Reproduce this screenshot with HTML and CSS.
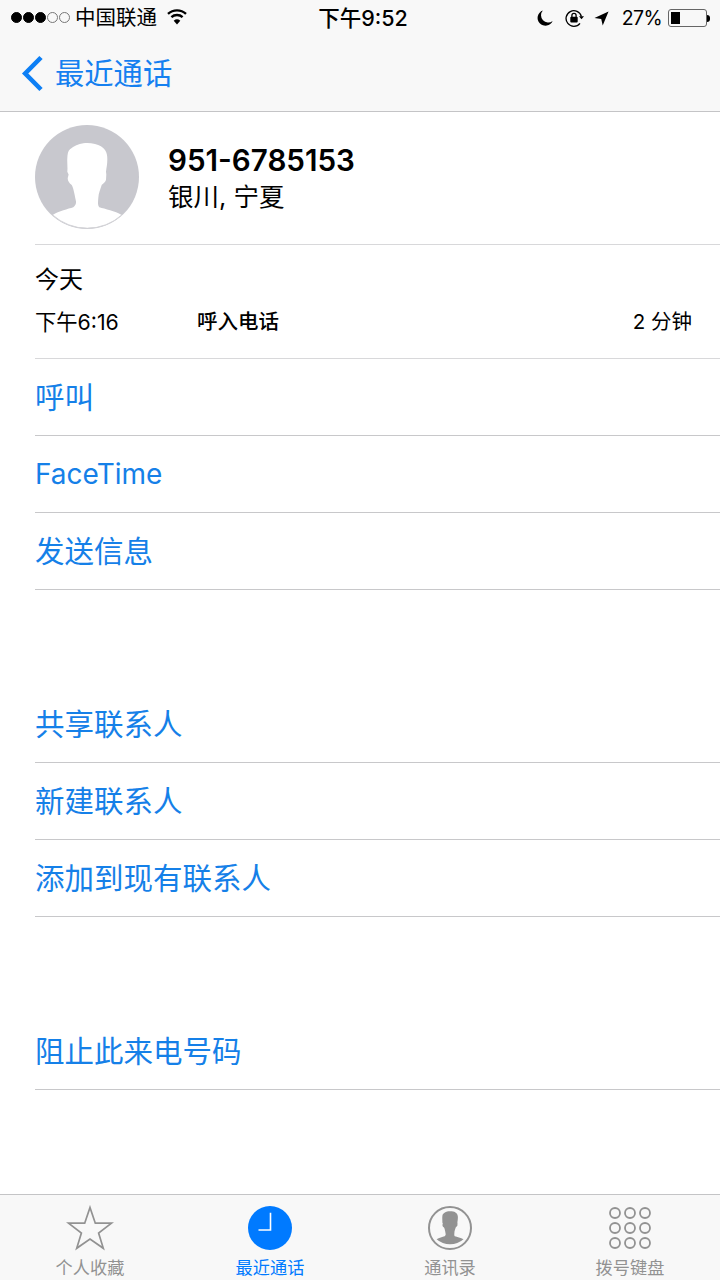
FILE: index.html
```html
<!DOCTYPE html>
<html lang="zh-CN">
<head>
    <meta charset="UTF-8">
    <meta name="viewport" content="width=device-width, initial-scale=1.0">
    <link rel="stylesheet" href="styles.css">
    <title>最近通话</title>
</head>
<body>
    <div class="screen">
        <header class="top-bar">
            <div class="status-bar">
                <div class="status-left">
                    <span class="signal">
                        <i class="dot dot--on"></i><i class="dot dot--on"></i><i class="dot dot--on"></i><i class="dot"></i><i class="dot"></i>
                    </span>
                    <span class="carrier">中国联通</span>
                    <svg class="wifi" width="20" height="16" viewBox="0 0 20 16">
                        <path d="M10 15.500 6.700 11.800a5 5 0 0 1 6.600 0z" fill="#000"/>
                        <path d="M4.400 8.200a8.400 8.400 0 0 1 11.200 0M1 4.800a13.400 13.400 0 0 1 18 0" fill="none" stroke="#000" stroke-width="2.400"/>
                    </svg>
                </div>
                <div class="status-time">下午9:52</div>
                <div class="status-right">
                    <svg class="moon" width="16" height="16" viewBox="0 0 17 17">
                        <path d="M6.200 .6a7.600 7.600 0 0 0 10.400 11A8.300 8.300 0 1 1 6.200 .6z" fill="#000"/>
                    </svg>
                    <svg class="rotation" width="20" height="18" viewBox="0 0 20 18">
                        <path d="M16.400 7.500A7.800 7.800 0 1 0 15 14.300" fill="none" stroke="#000" stroke-width="1.300"/>
                        <path d="M14 7.200h5l-2.500 3z" fill="#000"/>
                        <rect x="5.300" y="7.800" width="7.400" height="5.600" rx="1" fill="#000"/>
                        <path d="M6.900 8V6.400a2.100 2.100 0 0 1 4.200 0V8" fill="none" stroke="#000" stroke-width="1.300"/>
                    </svg>
                    <svg class="arrow" width="15" height="15" viewBox="0 0 16 16">
                        <path d="M15.500 .6 .5 7.400l7.200 1 1.600 7z" fill="#000"/>
                    </svg>
                    <span class="battery-pct">27%</span>
                    <span class="battery"><span class="battery-level"></span></span>
                    <span class="battery-cap"></span>
                </div>
            </div>
            <nav class="nav-bar">
                <svg class="back" width="24" height="37" viewBox="0 0 24 37">
                    <path d="M21 2.500 5.200 18.500 21 34.500" fill="none" stroke="#0d7ff5" stroke-width="4.600"/>
                </svg>
                <span class="back-label">最近通话</span>
            </nav>
        </header>

        <main class="content">
            <section class="contact">
                <div class="avatar">
                    <svg width="104" height="104" viewBox="0 0 104 104">
                        <circle cx="52" cy="52" r="52" fill="#c8c8ce"/>
                        <path d="M17.700 90C24 86 33 84 38.300 82.300 41 80 41.500 78 40.700 75 39.500 69 38.500 63 36.700 60 34 58 32.800 56 32.700 53.300L33.600 49.500 32.300 46.700C32.800 42 32 38 32.300 33.300 32.500 29 33 26 35 24.300 39 21 43.500 19 48.300 18.300 52 17.800 56 18 60 19 64.500 20 68 22 70 25 72 28 72.400 31 72.300 35 72.300 39 71.500 43 71 46.700L71.300 49.500 71 55C70 57.500 68 58.500 66.700 60 65.500 64 63.500 68 63.300 73 63 77 62.500 80 64.300 82.300 70 84 80 86 86.700 90A52 52 0 0 1 17.700 90z" fill="#fff"/>
                        <path d="M17.700 90A51.500 51.500 0 0 0 86.700 90" fill="none" stroke="#d4d4d8"/>
                    </svg>
                </div>
                <div class="contact-text">
                    <div class="contact-number">951-6785153</div>
                    <div class="contact-place">银川, 宁夏</div>
                </div>
            </section>

            <section class="call-log">
                <div class="call-day">今天</div>
                <div class="call-row">
                    <span class="call-time">下午6:16</span>
                    <span class="call-type">呼入电话</span>
                    <span class="call-length">2 分钟</span>
                </div>
            </section>

            <ul class="actions">
                <li>呼叫</li>
                <li class="action-latin">FaceTime</li>
                <li>发送信息</li>
            </ul>

            <ul class="actions actions--spaced">
                <li>共享联系人</li>
                <li>新建联系人</li>
                <li>添加到现有联系人</li>
            </ul>

            <ul class="actions actions--spaced">
                <li>阻止此来电号码</li>
            </ul>
        </main>

        <footer class="tab-bar">
            <div class="tab">
                <svg width="48" height="46" viewBox="0 0 48 46">
                    <path d="M24 2.500 29.300 18.200H45.500L32.600 28 37.300 43.300 24 34 10.700 43.300 15.400 28 2.500 18.200H18.700z" fill="none" stroke="#929292" stroke-width="1.700"/>
                </svg>
                <span class="tab-label">个人收藏</span>
            </div>
            <div class="tab tab--active">
                <svg width="48" height="46" viewBox="0 0 48 46">
                    <circle cx="24" cy="23" r="22" fill="#007aff"/>
                    <path d="M24.500 7.700V25H12.500" fill="none" stroke="#fff" stroke-width="1.600"/>
                </svg>
                <span class="tab-label">最近通话</span>
            </div>
            <div class="tab">
                <svg width="48" height="46" viewBox="0 0 48 46">
                    <path transform="translate(3.700 -.84) scale(.39)" d="M17.700 90C24 86 33 84 38.300 82.300 41 80 41.500 78 40.700 75 39.500 69 38.500 63 36.700 60 34 58 32.800 56 32.700 53.300L33.600 49.500 32.300 46.700C32.800 42 32 38 32.300 33.300 32.500 29 33 26 35 24.300 39 21 43.500 19 48.300 18.300 52 17.800 56 18 60 19 64.500 20 68 22 70 25 72 28 72.400 31 72.300 35 72.300 39 71.500 43 71 46.700L71.300 49.500 71 55C70 57.500 68 58.500 66.700 60 65.500 64 63.500 68 63.300 73 63 77 62.500 80 64.300 82.300 70 84 80 86 86.700 90A52 52 0 0 1 17.700 90z" fill="#929292"/>
                    <circle cx="24" cy="23" r="21" fill="none" stroke="#929292" stroke-width="2"/>
                </svg>
                <span class="tab-label">通讯录</span>
            </div>
            <div class="tab">
                <svg width="48" height="46" viewBox="0 0 48 46">
                    <g fill="none" stroke="#929292" stroke-width="1.800">
                        <circle cx="9" cy="8" r="5"/><circle cx="24" cy="8" r="5"/><circle cx="39" cy="8" r="5"/>
                        <circle cx="9" cy="23" r="5"/><circle cx="24" cy="23" r="5"/><circle cx="39" cy="23" r="5"/>
                        <circle cx="9" cy="38" r="5"/><circle cx="24" cy="38" r="5"/><circle cx="39" cy="38" r="5"/>
                    </g>
                </svg>
                <span class="tab-label">拨号键盘</span>
            </div>
        </footer>
    </div>
</body>
</html>
```

FILE: styles.css
```css
* {
    box-sizing: border-box;
}

html, body {
    margin: 0;
    padding: 0;
}

body {
    width: 720px;
    height: 1280px;
    overflow: hidden;
    background-color: #fff;
    color: #000;
    font-family: Inter, "Noto Sans CJK SC", sans-serif;
}

.screen {
    display: flex;
    flex-direction: column;
    height: 1280px;
}

/* top */
.top-bar {
    height: 112px;
    background-color: #f8f8f8;
    border-bottom: 1px solid #c4c4c6;
}

.status-bar {
    display: grid;
    grid-template-columns: 1fr auto 1fr;
    align-items: center;
    height: 36px;
    font-size: 20px;
}

.status-left {
    display: flex;
    align-items: center;
    padding-left: 11px;
}

.signal {
    display: flex;
    gap: 1px;
    margin-top: -2px;
}

.dot {
    display: block;
    width: 11px;
    height: 11px;
    border: 1px solid #777;
    border-radius: 50%;
}

.dot--on {
    background-color: #000;
    border-color: #000;
}

.carrier {
    margin-left: 5px;
    font-size: 20.5px;
    line-height: 36px;
}

.wifi {
    margin-left: 10px;
    margin-top: -3px;
}

.status-time {
    padding-left: 6px;
    font-size: 21.5px;
    font-weight: 500;
    line-height: 36px;
}

.status-right {
    display: flex;
    align-items: center;
    justify-content: flex-end;
    padding-right: 10px;
}

.moon {
    margin-right: 12px;
}

.rotation {
    margin-right: 9px;
}

.arrow {
    margin-right: 13px;
}

.battery-pct {
    margin-right: 6px;
    font-size: 19.5px;
    letter-spacing: -.6px;
}

.battery {
    display: block;
    width: 39px;
    height: 18px;
    padding: 2px;
    border: 1px solid #666;
    border-radius: 3px;
}

.battery-level {
    display: block;
    width: 9px;
    height: 100%;
    background-color: #000;
}

.battery-cap {
    display: block;
    width: 3px;
    height: 7px;
    background-color: #000;
    border-radius: 0 3px 3px 0;
}

.nav-bar {
    display: flex;
    align-items: center;
    height: 75px;
    padding-left: 20px;
    color: #1580f0;
}

.back-label {
    margin-left: 11px;
    padding-bottom: 6px;
    font-size: 29.3px;
}

/* body */
.content {
    flex: 1;
}

.contact {
    display: flex;
    align-items: center;
    height: 133px;
    margin-left: 35px;
    border-bottom: 1px solid #d8d8da;
}

.avatar {
    width: 104px;
    height: 104px;
    margin-top: -2px;
}

.avatar svg {
    display: block;
}

.contact-text {
    margin-left: 29px;
}

.contact-number {
    font-size: 29.6px;
    font-weight: 600;
    line-height: 36px;
}

.contact-place {
    margin-top: 1px;
    font-size: 25.5px;
    line-height: 36px;
}

.call-log {
    height: 114px;
    margin-left: 35px;
    border-bottom: 1px solid #d8d8da;
}

.call-day {
    padding-top: 17px;
    font-size: 24px;
    line-height: 36px;
}

.call-row {
    display: flex;
    align-items: center;
    margin-top: 9px;
    padding-right: 28px;
    line-height: 30px;
}

.call-time {
    width: 162px;
    font-size: 21.3px;
}

.call-type {
    font-size: 20.5px;
    font-weight: 500;
}

.call-length {
    margin-left: auto;
    font-size: 20.5px;
}

.actions {
    margin: 0;
    padding: 0 0 0 35px;
    list-style: none;
    color: #1580e8;
    font-size: 29.5px;
}

.actions li {
    height: 77px;
    line-height: 77px;
    border-bottom: 1px solid #c8c8ca;
}

.actions .action-latin {
    font-size: 28px;
}

.actions--spaced {
    margin-top: 96px;
}

/* tabs */
.tab-bar {
    display: grid;
    grid-template-columns: repeat(4, 180px);
    height: 86px;
    padding-top: 10px;
    background-color: #f8f8f8;
    border-top: 1px solid #c4c4c6;
}

.tab {
    display: flex;
    flex-direction: column;
    align-items: center;
    color: #929292;
}

.tab svg {
    display: block;
}

.tab-label {
    margin-top: 5px;
    font-size: 17.2px;
    line-height: 24px;
}

.tab--active {
    color: #007aff;
}
```
